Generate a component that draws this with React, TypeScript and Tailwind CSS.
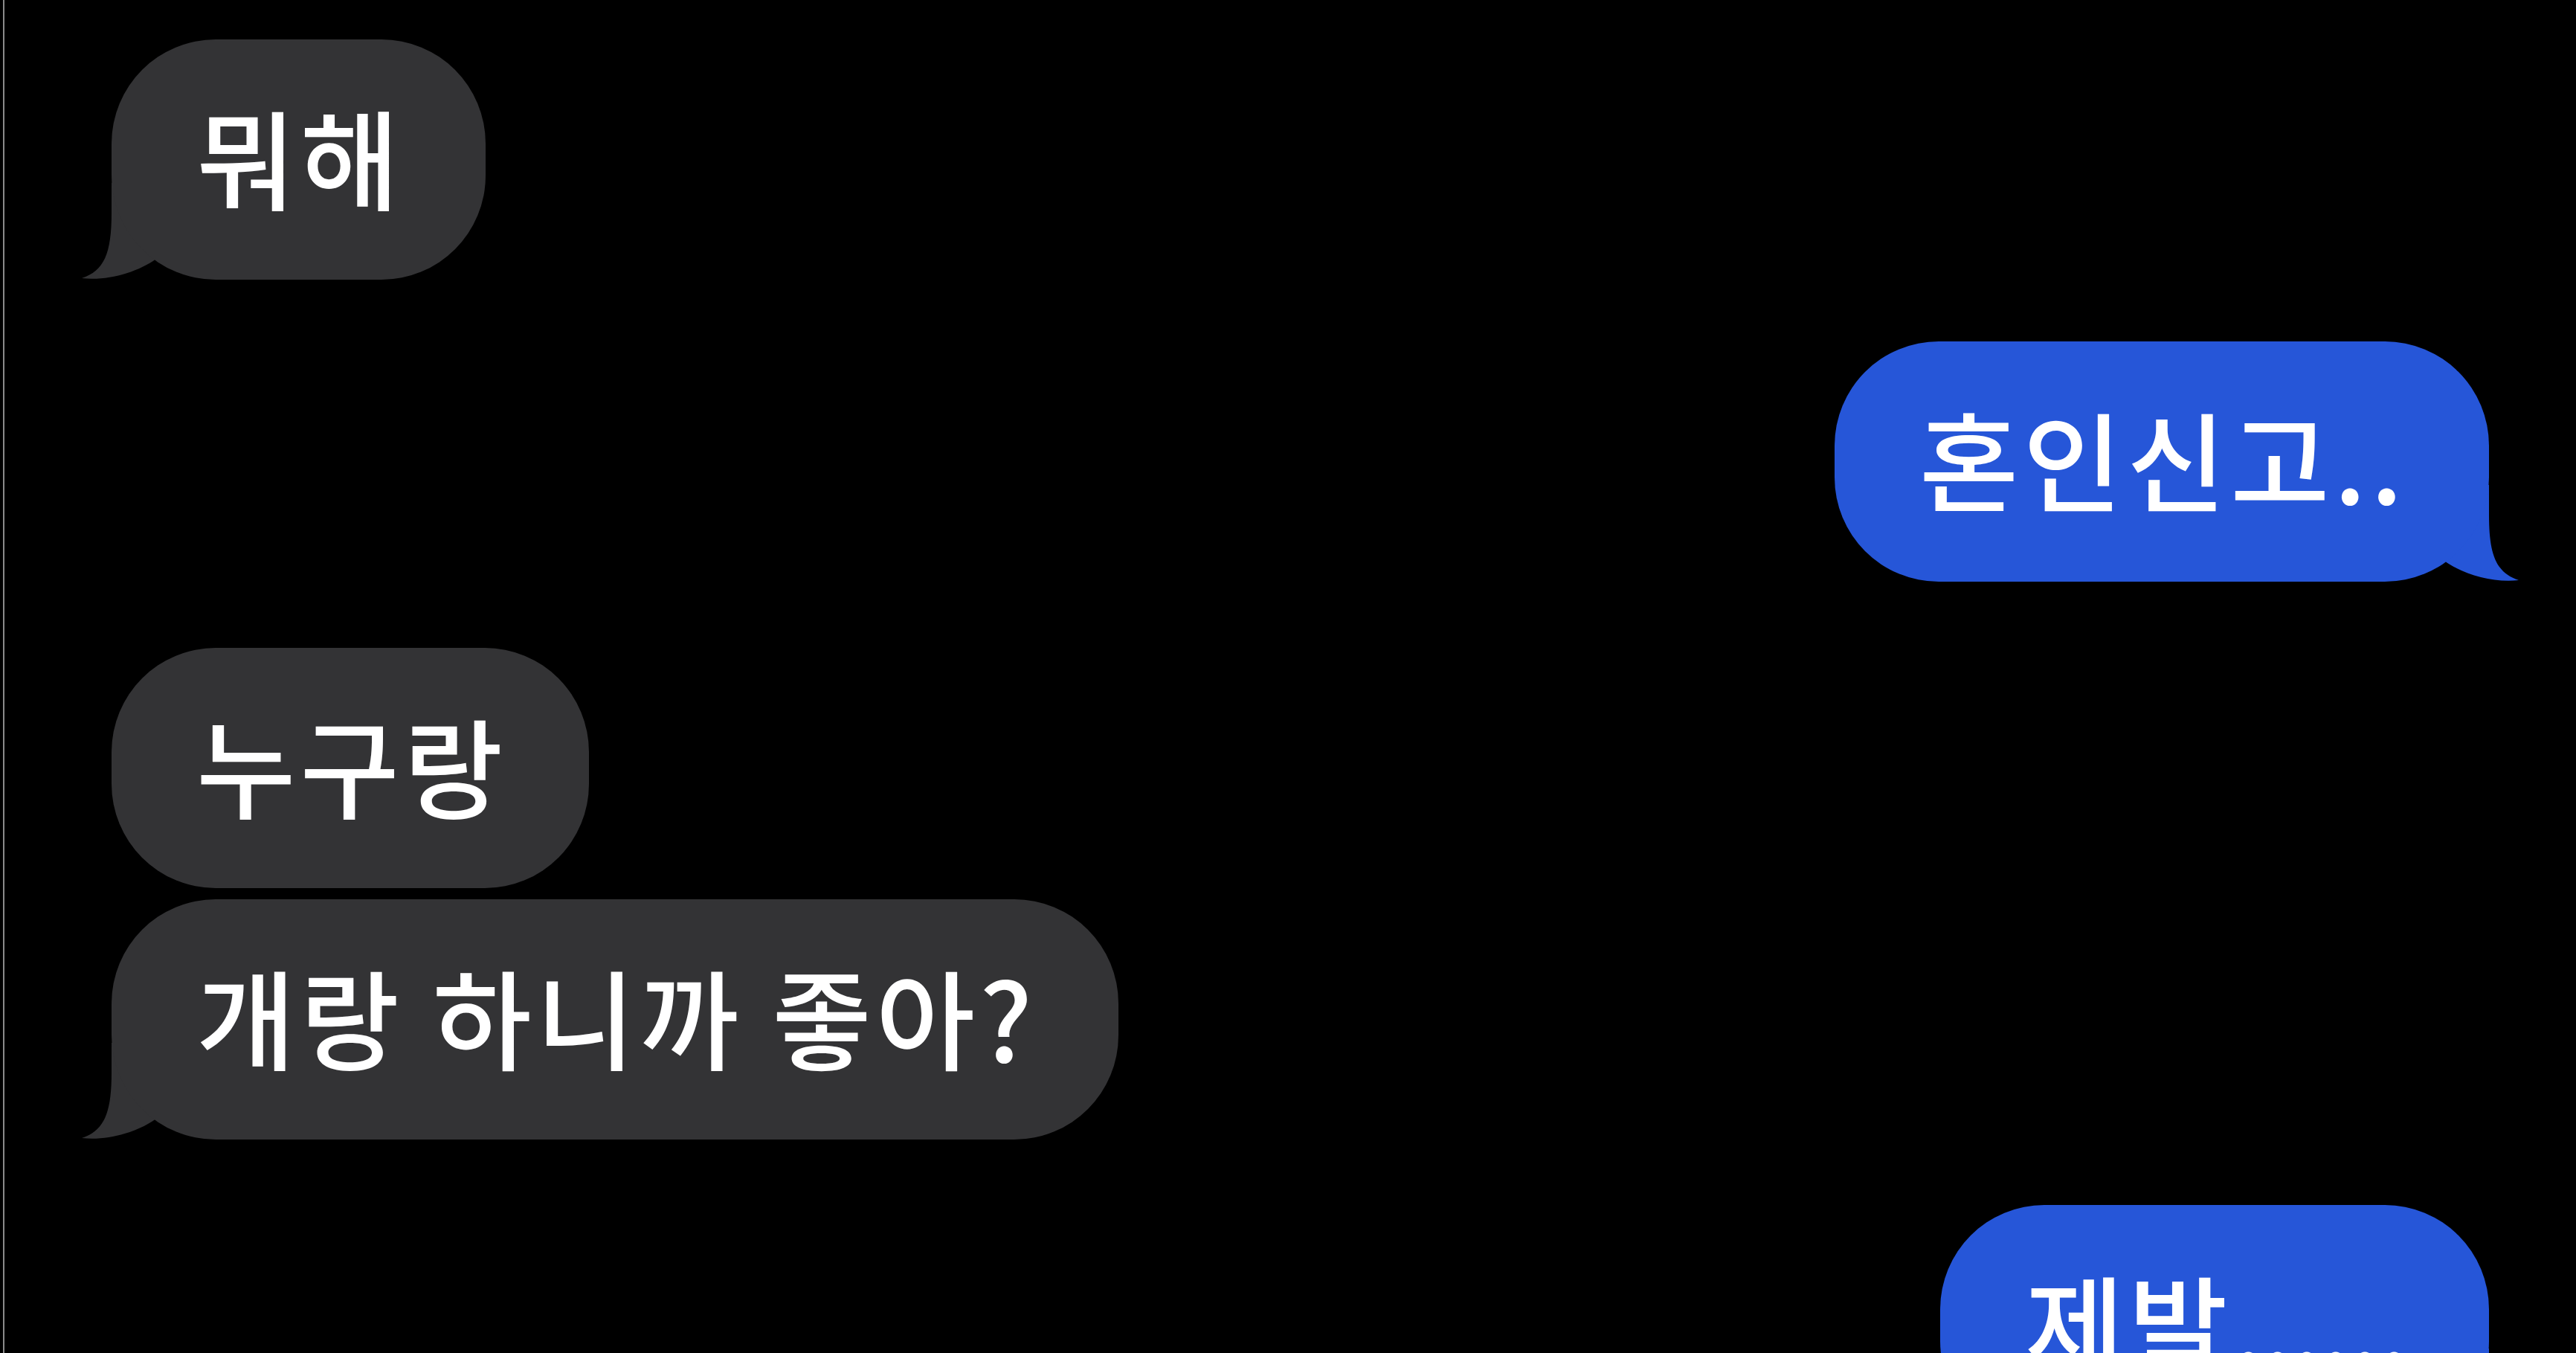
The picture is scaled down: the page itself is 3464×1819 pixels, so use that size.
import React from 'react';

type Msg = {
  from: 'them' | 'me';
  text: string;
  trail?: string;
  tail: boolean;
  gap: string;
};

const messages: Msg[] = [
  { from: 'them', text: '뭐해', tail: true, gap: 'mt-[53px]' },
  { from: 'me', text: '혼인신고..', tail: true, gap: 'mt-[83px]' },
  { from: 'them', text: '누구랑', tail: false, gap: 'mt-[89px]' },
  { from: 'them', text: '개랑 하니까 좋아?', tail: true, gap: 'mt-[15px]' },
  { from: 'me', text: '제발', trail: '......', tail: true, gap: 'mt-[88px]' },
];

// little hook under the bubble, drawn for the left side and mirrored for the right
function Tail({ side }: { side: 'them' | 'me' }) {
  const isMe = side === 'me';
  return (
    <svg
      viewBox="0 0 110 130"
      className={
        isMe
          ? 'absolute -right-[40px] bottom-0 h-[130px] w-[110px] -scale-x-100 fill-[#2656d8]'
          : 'absolute -left-[40px] bottom-0 h-[130px] w-[110px] fill-[#333335]'
      }
    >
      <path d="M40 0 L40 40 C40 95 30 118 0 128 C35 132 75 120 100 102 L110 100 L110 0 Z" />
    </svg>
  );
}

function Bubble({ msg }: { msg: Msg }) {
  const isMe = msg.from === 'me';
  return (
    <div
      className={`${msg.gap} ${isMe ? 'self-end mr-[117px]' : 'self-start ml-[144px]'} relative`}
    >
      {msg.tail && <Tail side={msg.from} />}
      <div
        className={`relative whitespace-pre rounded-[140px] pl-[114px] pr-[110px] pt-[72px] pb-[83px] text-[145px] leading-[168px] font-medium tracking-[6px] text-white font-['Noto_Sans_CJK_KR','Noto_Sans',sans-serif] ${
          isMe ? 'bg-[#2656d8]' : 'bg-[#333335]'
        }`}
      >
        {msg.text}
        {msg.trail && <span className="tracking-[-4px]">{msg.trail}</span>}
      </div>
    </div>
  );
}

export default function App() {
  return (
    <div className="flex h-screen w-full overflow-hidden bg-black">
      <div className="ml-[4px] w-[2px] shrink-0 bg-[#8a8a8a]" />
      <main className="flex flex-1 flex-col">
        {messages.map((m, i) => (
          <Bubble key={i} msg={m} />
        ))}
      </main>
    </div>
  );
}
